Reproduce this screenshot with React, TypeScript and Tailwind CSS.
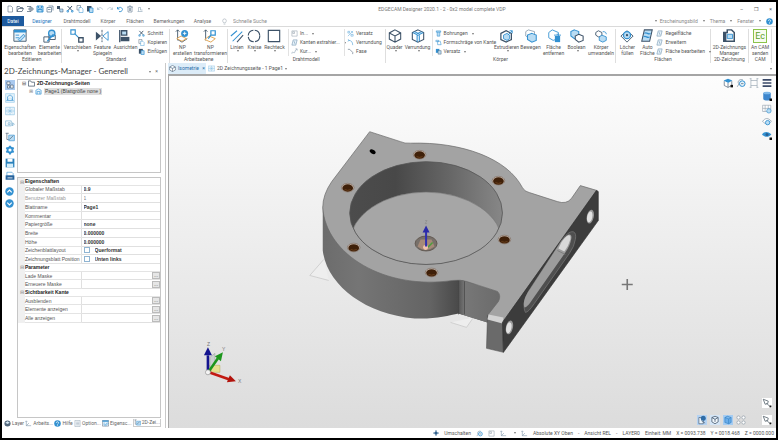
import { type ReactNode } from "react"
import clsx from "clsx"

const NAVY = "#3d5268"
const BLUE = "#3391d1"
const PALE = "#b9dcf3"

// Two-tone icons, all drawn on a 16x16 grid
const icons: Record<string, ReactNode> = {
  file: <path d="M4 2h6l3 3v9H4z" fill="#fff" stroke={NAVY} />,
  open: <path d="M2 13V3h5l1 2h5v2M2 13l3-6h10l-3 6z" fill="#fff" stroke={NAVY} strokeWidth="1.4" />,
  insert: <path d="M2 3h8v10H2M6 6h8v4H6z" fill="#fff" stroke={NAVY} strokeWidth="1.3" />,
  save: <path d="M2 2h12v12H2zM5 2v4h6V2M4 14V9h8v5" fill={PALE} stroke={BLUE} strokeWidth="1.8" />,
  saveAll: <path d="M5 2h9v9M2 5h9v9H2zM4 9h5" fill="#fff" stroke="#58728c" strokeWidth="1.4" />,
  scan: (
    <>
      <path d="M2 2h6v6H2z" fill={NAVY} />
      <path d="M7 8h7v6H8z" fill={PALE} stroke={NAVY} />
    </>
  ),
  cut: (
    <>
      <path d="M3 2l9 9M12 2L4 11" stroke={NAVY} strokeWidth="2" />
      <path d="M2 11h3v3H2zM11 11h3v3h-3z" fill="#fff" stroke={BLUE} strokeWidth="1.6" />
    </>
  ),
  copy: (
    <>
      <path d="M2 1h7v9H2z" fill="#fff" stroke={NAVY} />
      <path d="M6 5h5l3 3v7H6z" fill="#fff" stroke={BLUE} />
    </>
  ),
  paste: (
    <>
      <path d="M2 2h9v11H2z" fill={NAVY} />
      <path d="M7 6h7v9H7z" fill={PALE} stroke={BLUE} strokeWidth="1.5" />
    </>
  ),
  undo: <path d="M3 5v4h4M3 9c3-5 8-5 10 0" fill="none" stroke="#a9bccb" strokeWidth="1.6" />,
  redo: <path d="M13 5v4H9M13 9c-3-5-8-5-10 0" fill="none" stroke="#b8c7d2" strokeWidth="1.6" />,
  refresh: <path d="M3 4v4h4M3 8c3-5 9-4 10 1-1 4-4 5-7 4" fill="none" stroke={BLUE} strokeWidth="1.8" />,
  bin: <path d="M2 4h12M6 4V2h4v2M4 4v10h8V4M7 6v6M9 6v6" fill="none" stroke="#6a8095" strokeWidth="1.3" />,
  pin: <path d="M3 13h10M5 13V5h4v5h4" fill="none" stroke="#9cb0c0" strokeWidth="1.4" />,
  properties: (
    <>
      <path d="M1 1h14v13H1z" fill="#eaf5fc" stroke={NAVY} />
      <path d="M1 1h14v3H1z" fill={BLUE} />
      <path d="M3 7h4M3 10h4M6 12l6-6 2 2-6 6z" fill={PALE} stroke={BLUE} />
    </>
  ),
  elements: (
    <>
      <path d="M1 9h6v6H1zM7 7h7v5H7z" fill="#fff" stroke={NAVY} />
      <circle cx="10" cy="5" r="3.6" fill={PALE} stroke={BLUE} strokeWidth="1.5" />
      <path d="M5 14l7-8" stroke={BLUE} strokeWidth="1.5" />
    </>
  ),
  move: (
    <>
      <path d="M1 1h5v5H1zM5 5l6 6" fill="#fff" stroke={BLUE} strokeWidth="1.3" />
      <path d="M10 10h5v5h-5z" fill="#fff" stroke={NAVY} strokeWidth="1.5" />
    </>
  ),
  mirror: (
    <>
      <path d="M1 3l6 5-6 5z" fill={NAVY} />
      <path d="M15 3l-6 5 6 5z" fill="#fff" stroke={BLUE} />
      <path d="M8 1v14" stroke={NAVY} strokeDasharray="3 1" />
    </>
  ),
  align: (
    <>
      <path d="M2 1v14" stroke={NAVY} strokeWidth="1.5" />
      <path d="M4 2h6v5H4z" fill={PALE} stroke={NAVY} strokeWidth="1.5" />
      <path d="M3 9h10v5H3z" fill={NAVY} />
    </>
  ),
  plane: (
    <>
      <path d="M3 1v12M1 3l2-2 2 2M3 12l5 3 6-4" fill="none" stroke={NAVY} />
      <path d="M2 11l5-3 6 3-5 3z" fill="#fff" stroke="#dd9c43" />
      <circle cx="11" cy="5" r="4" fill={BLUE} />
      <path d="M11 3v4M9 5h4" stroke="#fff" />
    </>
  ),
  planeMove: (
    <>
      <path d="M3 1v12M1 3l2-2 2 2" fill="none" stroke={NAVY} />
      <path d="M2 12l5-4 7 3-5 4z" fill="#fff" stroke="#dd9c43" />
      <path d="M9 2h5v5H9zM6 11l3-4" fill="#fff" stroke={BLUE} strokeWidth="1.4" />
    </>
  ),
  lines: (
    <>
      <path d="M1 8l7-6M3 14L14 3" stroke={BLUE} strokeWidth="1.2" />
      <path d="M8 15l7-8" stroke={NAVY} strokeWidth="1.2" />
    </>
  ),
  circle: <circle cx="8" cy="8" r="6.6" fill="none" stroke={NAVY} strokeWidth="1.3" strokeDasharray="8.8 1.6" />,
  rect: <path d="M1.5 1.5h13v13h-13z" fill="none" stroke={NAVY} strokeWidth="1.3" />,
  smallRect: <path d="M2 2h12v12H2zM4 4h4v4H4z" fill="none" stroke="#7d8c9a" />,
  sheet: <path d="M5 2h9l-3 12H2zM7 5l2 6" fill="#e6f2fa" stroke="#6f93b0" strokeWidth="1.3" />,
  curve: <path d="M2 13c1-9 5 2 7-4 1-4 2-6 5-6M10 2h4v4" fill="none" stroke="#7b93a8" strokeWidth="1.2" />,
  offset: <path d="M2 3h4v4H2zM9 2l5 5M2 14l12-12M9 10h5v4H9z" fill="none" stroke={BLUE} />,
  fillet: <path d="M3 3c7 0 10 4 10 11M2 6l3-3-3-2" fill="none" stroke={BLUE} strokeWidth="1.2" />,
  chamfer: <path d="M2 3h4l7 7v4" fill="none" stroke={NAVY} strokeWidth="1.2" />,
  cube: <path d="M8 1l6.5 3.5v7L8 15l-6.5-3.5v-7zM1.5 4.5L8 8l6.5-3.5M8 8v7" fill="#fff" stroke={NAVY} strokeWidth="1.2" />,
  cubeRound: (
    <>
      <path d="M8 1l6.5 3v8L8 15l-6.5-3V4z" fill="#fff" stroke={NAVY} strokeWidth="1.2" />
      <path d="M2 4l6 3 6-3M7 7v8M9.5 7v7M4 3l6 3M12 3L6 6" fill="none" stroke={BLUE} strokeWidth="1.2" />
    </>
  ),
  hole: <path d="M3 2h10v3H3zM5 5v9h6V5" fill={PALE} stroke={BLUE} strokeWidth="1.3" />,
  draft: <path d="M2 3h6v3H2zM6 5h6l2 8H6z" fill="#fff" stroke={BLUE} strokeWidth="1.3" />,
  offsetBody: (
    <>
      <path d="M2 2h8v9H2z" fill={BLUE} />
      <path d="M7 6h7v8H7z" fill={PALE} stroke={NAVY} />
    </>
  ),
  extrude: (
    <>
      <path d="M1 5l6-3 6 3v7l-6 3-6-3z" fill="#fff" stroke={NAVY} strokeWidth="1.4" />
      <path d="M4 7l4-2 3 2v4l-3 2-4-2z" fill={PALE} stroke={BLUE} />
      <path d="M9 7l5-5M11 2h3v3" stroke={BLUE} fill="none" />
    </>
  ),
  moveBody: (
    <>
      <path d="M5 1l7 2v7l-6 1-4-3V3z" fill="#fff" stroke="#8da0b1" />
      <path d="M9 5l5 2v6l-5 2-5-3V7z" fill={PALE} stroke={BLUE} strokeWidth="1.2" />
    </>
  ),
  deleteFace: (
    <>
      <path d="M6 1l7 3v7l-6 2-5-3V4z" fill="#fff" stroke={BLUE} />
      <path d="M9 8h6v7H9z" fill={BLUE} />
      <path d="M8 7h8M11 6h2" stroke={BLUE} />
    </>
  ),
  boolean: (
    <>
      <path d="M5 1l5 2v6l-5 2-4-3V3z" fill={PALE} stroke={BLUE} strokeWidth="1.2" />
      <path d="M10 6l5 2v5l-5 2-4-3V8z" fill="#fff" stroke={NAVY} strokeWidth="1.2" />
    </>
  ),
  convert: (
    <>
      <path d="M5 2l4 2v4L5 9 2 7V4z" fill="#fff" stroke={NAVY} />
      <path d="M9 7l5 2v4l-4 2-4-2V9z" fill={PALE} stroke={BLUE} />
      <path d="M10 3c3 0 4 1 4 3" stroke={BLUE} fill="none" />
    </>
  ),
  fillHoles: (
    <>
      <path d="M1 8l7-6 7 6-7 7z" fill="#fff" stroke={NAVY} />
      <circle cx="8" cy="7" r="4" fill={PALE} stroke={BLUE} strokeWidth="1.5" />
      <circle cx="8" cy="7" r="1.3" fill={NAVY} />
    </>
  ),
  autoFace: (
    <>
      <path d="M5 1h9l-3 13H2z" fill={PALE} stroke={NAVY} strokeWidth="1.2" />
      <path d="M5 5c3-2 4 2 7 0M4 9c3-2 4 2 7 0" fill="none" stroke={BLUE} strokeWidth="1.3" />
    </>
  ),
  drawing: (
    <>
      <path d="M2 4h4V1h5l3 3v10H2z" fill="#fff" stroke={NAVY} strokeWidth="1.7" />
      <path d="M6 6h6v5H6z" fill={PALE} stroke={BLUE} />
      <path d="M2 4v10h3V4z" fill={NAVY} />
    </>
  ),
  view: (
    <>
      <path d="M1 1h14v14H1z" fill="#e3f2fb" stroke="#9ccbe8" />
      <path d="M4 6l4-3 4 3v6H4zM2 13l4-4M14 13l-4-4" fill="none" stroke={BLUE} />
    </>
  ),
  views: (
    <>
      <path d="M0 0h16v16H0z" fill="#a9c9ef" />
      <path d="M3 3h5v4H3zM9 8h4v5H9zM4 9h3v4H4z" fill="#fff" stroke={NAVY} />
    </>
  ),
  grid: <path d="M1 2h14v12H1zM1 8h14M8 2v12M4 5l8 6M12 5l-8 6" fill="#edf6fc" stroke="#8ac1e4" />,
  section: <path d="M1 3h9v8H1zM5 6h3v3H5zM12 6l3 2-3 3z" fill="#fff" stroke="#6ba6cc" />,
  tree: (
    <>
      <path d="M1 2h5M3 2v10h3" fill="none" stroke={NAVY} />
      <path d="M6 5h9v9H6z" fill={PALE} stroke={BLUE} />
      <path d="M7 12l6-6" stroke={NAVY} />
    </>
  ),
  gear: (
    <>
      <circle cx="8" cy="8" r="5.5" fill={BLUE} />
      <path d="M8 1v14M2 4.500l12 7M14 4.500l-12 7" stroke={BLUE} strokeWidth="3" />
      <circle cx="8" cy="8" r="2.5" fill="#fff" />
    </>
  ),
  floppy: (
    <>
      <path d="M1 1h14v14H1z" fill="#2980bb" />
      <path d="M4 1h8v5H4z" fill="#fff" />
      <path d="M3 9h10v6H3z" fill="#d5eefa" />
    </>
  ),
  printer: (
    <>
      <path d="M3 2h8l2 2v4H3z" fill="#fff" stroke={BLUE} />
      <path d="M1 7h14v7H1z" fill="#27639d" />
      <path d="M4 11h8" stroke="#fff" strokeWidth="1.3" />
    </>
  ),
  up: (
    <>
      <circle cx="8" cy="8" r="7.5" fill={BLUE} />
      <path d="M4 9.500l4-4 4 4" fill="none" stroke="#fff" strokeWidth="2" />
    </>
  ),
  down: (
    <>
      <circle cx="8" cy="8" r="7.5" fill={BLUE} />
      <path d="M4 6.500l4 4 4-4" fill="none" stroke="#fff" strokeWidth="2" />
    </>
  ),
  help: (
    <>
      <circle cx="8" cy="8" r="7.5" fill={BLUE} />
      <path d="M5.500 6.500c0-4 5-3 5 0 0 2-2.500 1.500-2.500 4M8 12v1.500" fill="none" stroke="#fff" strokeWidth="1.6" />
    </>
  ),
  bulb: <path d="M6 11c-3-3-3-9 2-9s5 6 2 9zM6 14h4" fill="none" stroke="#93a0ab" strokeWidth="1.2" />,
  layer: (
    <>
      <circle cx="8" cy="8" r="7" fill="#52677c" />
      <path d="M3 6l5-3 5 3-5 3z" fill="#d7e7f2" />
    </>
  ),
  axes: <path d="M3 2v11h11M3 13l6-6M1 4l2-2 2 2" fill="none" stroke="#7b93a8" strokeWidth="1.3" />,
  options: <path d="M2 1h12v14H2zM5 5h7M5 8h7M5 11h7" fill="#f2f6f9" stroke="#8799a9" />,
  shaded: (
    <>
      <path d="M1 4l7-3 7 3-7 4z" fill={BLUE} />
      <path d="M2 5v7l6 3V8M14 5v7l-6 3" fill="#fff" stroke={NAVY} />
      <path d="M12 11h4v4h-4z" fill="#111" />
    </>
  ),
  zoom: (
    <>
      <path d="M2 14l3-5M4 9c-2-4 2-8 7-6" fill="none" stroke="#8b9dac" strokeWidth="1.4" />
      <circle cx="10" cy="9" r="4.5" fill="#e5f3fb" stroke={BLUE} strokeWidth="1.6" />
      <path d="M8 9h4" stroke={NAVY} />
    </>
  ),
  fit: <path d="M3 1v14M13 1v14M3 4h10M3 12h10M1 1h3M12 1h3M1 15h3M12 15h3" fill="none" stroke="#93a2af" />,
  menu: <path d="M1 3h14M1 8h14M1 13h14" stroke="#3b4a68" strokeWidth="2.6" />,
  cylinder: (
    <>
      <path d="M2 3v10c2 3 10 3 12 0V3z" fill="#3d86cd" />
      <ellipse cx="8" cy="3" rx="6" ry="2" fill="#7db7e8" />
      <path d="M12 12h4v4h-4z" fill="#111" />
    </>
  ),
  mesh: (
    <>
      <path d="M1 2h13v10H1zM1 7h13M5 2v10M10 2v10" fill="#fff" stroke="#94a1ad" />
      <circle cx="11" cy="11" r="3.5" fill={PALE} stroke={BLUE} />
    </>
  ),
  eye: (
    <>
      <path d="M1 7c4-6 9-6 14 0-5 5-10 5-14 0z" fill="#fff" stroke="#74889a" />
      <circle cx="9" cy="9" r="3.5" fill={PALE} stroke={BLUE} strokeWidth="1.4" />
    </>
  ),
  eyeFill: (
    <>
      <path d="M0 7c4-5 9-5 15 0-5 5-10 5-15 0z" fill={BLUE} />
      <circle cx="8" cy="7" r="2.4" fill="#2a5f91" />
      <path d="M12 12h4v4h-4z" fill="#111" />
    </>
  ),
  box: <path d="M8 2l5 2v7l-5 3-5-3V4zM3 4l5 3 5-3M8 7v4" fill="#f2f8fd" stroke={NAVY} strokeWidth="1.2" />,
  wire: (
    <>
      <path d="M3 4h7v10H3z" fill="#eef6fd" stroke={NAVY} />
      <circle cx="10" cy="5" r="4" fill="#2f6ca6" />
      <path d="M7 9l6 4" stroke={NAVY} />
    </>
  ),
  solid: <path d="M3 4l4-2 6 2v8l-4 2-6-2zM3 4l6 2 4-2M9 6v8" fill="#6badea" stroke="#2f7ec2" />,
  dots: (
    <g fill="#fff" stroke="#8794a1">
      <circle cx="4" cy="4" r="2.6" />
      <circle cx="12" cy="4" r="2.6" />
      <circle cx="4" cy="12" r="2.6" />
      <circle cx="12" cy="12" r="2.6" />
    </g>
  ),
  pick: (
    <>
      <path d="M2 2l8 3-1 4-4 1zM7 8l5 5" fill="#fff" stroke="#57656f" strokeWidth="1.3" />
      <path d="M12 12h3v3h-3z" fill="#111" />
    </>
  ),
  cross: (
    <>
      <path d="M8 0l3 4H5zM8 16l3-4H5zM0 8l4-3v6zM16 8l-4-3v6z" fill="#31618c" />
      <circle cx="8" cy="8" r="4" fill="#31618c" />
    </>
  ),
  folder: <path d="M1 14V2h5l2 3h7v9z" fill="#fff" stroke="#44566a" strokeWidth="1.7" />,
  page: <path d="M2 5l6-3 6 3v9H2zM5 14V8h6v6" fill="#e7f4fd" stroke={BLUE} strokeWidth="1.4" />,
}

const Icon = ({ name, className }: { name: string; className: string }) => (
  <svg viewBox="0 0 16 16" aria-hidden="true" className={clsx("shrink-0", className)}>
    {icons[name]}
  </svg>
)

const Caret = () => <span className="ml-0.5 inline-block border-x-[1px] border-t-[2px] border-x-transparent border-t-[#777]" />

const Big = ({ icon, lines, width, caret }: { icon: string; lines: string[]; width: string; caret?: boolean }) => (
  <button className={clsx("flex shrink-0 flex-col items-center whitespace-nowrap", width)}>
    <Icon name={icon} className="mb-[1px] size-[14px]" />
    {lines.map((line) => (
      <span key={line} className="leading-[6px]">{line}</span>
    ))}
    {caret && <Caret />}
  </button>
)

const Small = ({ icon, label, caret }: { icon: string; label: string; caret?: boolean }) => (
  <button className="flex h-[9px] items-center gap-[2px] whitespace-nowrap">
    <Icon name={icon} className="size-[7px]" />
    <span>{label}</span>
    {caret && <Caret />}
  </button>
)

const Group = ({ label, className, children }: { label: string; className: string; children: ReactNode }) => (
  <section className={clsx("flex min-w-0 basis-0 flex-col border-r border-[#dedede]", className)}>
    <div className="flex h-[28px] items-start">{children}</div>
    <div className="text-center leading-[7px]">{label}</div>
  </section>
)

const Ec = () => (
  <button className="flex w-full flex-col items-center whitespace-nowrap">
    <span className="mb-[1px] flex size-[14px] items-center justify-center border border-[#8bc34a] bg-[#f7fcf0] text-[9px] leading-none text-[#5da02b]">
      Ec
    </span>
    <span className="leading-[6px]">An CAM</span>
    <span className="leading-[6px]">senden</span>
  </button>
)

const quick = ["file", "open", "insert", "save", "saveAll", "scan", "cut", "copy", "paste", "undo", "redo", "refresh", "bin", "pin"]

const TitleBar = () => (
  <header className="grid h-[14px] grid-cols-[1fr_auto_1fr] items-center">
    <div className="flex items-center gap-[2px] pl-1">
      {quick.map((name) => (
        <button key={name} aria-label={name}>
          <Icon name={name} className="size-2" />
        </button>
      ))}
      <Caret />
    </div>
    <h1 className="pl-[106px] font-normal text-[#777]">EDGECAM Designer 2020.1 - 2 - 0x2 model complete VDP</h1>
    <div className="flex justify-end gap-[11px] pr-1 leading-none text-[#555]">
      <button aria-label="Minimieren">–</button>
      <button aria-label="Wiederherstellen">❐</button>
      <button aria-label="Schließen">×</button>
    </div>
  </header>
)

const Tabs = () => (
  <nav className="flex h-[10px] items-stretch text-[#666]">
    <button className="w-[22px] bg-[#1d5a9e] text-white">Datei</button>
    <button className="w-[36px] text-[#2a77bd]">Designer</button>
    <button className="w-[34px]">Drahtmodell</button>
    <button className="w-[28px]">Körper</button>
    <button className="w-[26px]">Flächen</button>
    <button className="w-[42px]">Bemerkungen</button>
    <button className="w-[25px]">Analyse</button>
    <label className="ml-[6px] flex items-center gap-[5px]">
      <Icon name="bulb" className="size-[7px]" />
      <input aria-label="Schnelle Suche" placeholder="Schnelle Suche" className="w-20 outline-none placeholder:text-[#888]" />
    </label>
    <div className="ml-auto flex items-center gap-[3px] pr-[3px] text-[#888]">
      <Caret />
      <button>Erscheinungsbild</button>
      <Caret />
      <button className="ml-[2px]">Thema</button>
      <Caret />
      <button className="ml-[2px]">Fenster</button>
      <Caret />
      <button aria-label="Hilfe" className="ml-[2px]">
        <Icon name="help" className="size-[7px]" />
      </button>
    </div>
  </nav>
)

const Ribbon = () => (
  <div className="flex h-[37px] border-t border-[#dadada] pt-[2px] pr-1">
    <Group label="Editieren" className="grow-[60]">
      <Big icon="properties" lines={["Eigenschaften", "bearbeiten"]} width="w-[36px]" />
      <Big icon="elements" lines={["Elemente", "bearbeiten"]} width="w-[23px]" />
    </Group>
    <Group label="Standard" className="grow-[108]">
      <Big icon="move" lines={["Verschieben"]} width="w-[30px]" caret />
      <Big icon="mirror" lines={["Feature", "Spiegeln"]} width="w-[20px]" />
      <Big icon="align" lines={["Ausrichten"]} width="w-[26px]" />
      <div>
        <Small icon="cut" label="Schnitt" />
        <Small icon="copy" label="Kopieren" />
        <Small icon="paste" label="Einfügen" />
      </div>
    </Group>
    <Group label="Arbeitsebene" className="grow-[57]">
      <Big icon="plane" lines={["NP", "erstellen"]} width="w-[24px]" />
      <Big icon="planeMove" lines={["NP", "transformieren"]} width="w-[32px]" />
    </Group>
    <Group label="Drahtmodell" className="grow-[158]">
      <Big icon="lines" lines={["Linien"]} width="w-[18px]" caret />
      <Big icon="circle" lines={["Kreise"]} width="w-[17px]" caret />
      <Big icon="rect" lines={["Rechteck"]} width="w-[23px]" caret />
      <div className="ml-[2px] w-[56px] border-l border-[#e2e2e2] pl-[2px]">
        <Small icon="smallRect" label="In..." caret />
        <Small icon="sheet" label="Kanten extrahier..." caret />
        <Small icon="curve" label="Kur..." caret />
      </div>
      <div className="border-l border-[#e2e2e2] pl-[2px]">
        <Small icon="offset" label="Versatz" />
        <Small icon="fillet" label="Verrundung" />
        <Small icon="chamfer" label="Fase" />
      </div>
    </Group>
    <Group label="Körper" className="grow-[232]">
      <Big icon="cube" lines={["Quader"]} width="w-[18px]" caret />
      <Big icon="cubeRound" lines={["Verrundung"]} width="w-[28px]" caret />
      <div className="w-[62px] border-l border-[#e2e2e2] pl-[2px]">
        <Small icon="hole" label="Bohrungen" caret />
        <Small icon="draft" label="Formschräge von Kante" />
        <Small icon="offsetBody" label="Versatz" caret />
      </div>
      <Big icon="extrude" lines={["Extrudieren"]} width="w-[26px]" caret />
      <Big icon="moveBody" lines={["Bewegen"]} width="w-[22px]" />
      <Big icon="deleteFace" lines={["Fläche", "entfernen"]} width="w-[24px]" />
      <Big icon="boolean" lines={["Boolean"]} width="w-[22px]" caret />
      <Big icon="convert" lines={["Körper", "umwandeln"]} width="w-[27px]" />
    </Group>
    <Group label="Flächen" className="grow-[94]">
      <Big icon="fillHoles" lines={["Löcher", "füllen"]} width="w-[22px]" />
      <Big icon="autoFace" lines={["Auto", "Fläche"]} width="w-[18px]" />
      <div>
        <Small icon="sheet" label="Regelfläche" />
        <Small icon="sheet" label="Erweitern" />
        <Small icon="sheet" label="Fläche bearbeiten" caret />
      </div>
    </Group>
    <Group label="2D-Zeichnung" className="grow-[38]">
      <Big icon="drawing" lines={["2D-Zeichnungs", "Manager"]} width="w-full" />
    </Group>
    <Group label="CAM" className="grow-[22]">
      <Ec />
    </Group>
  </div>
)

type Row = { label: string; value?: string; kind?: "head" | "muted" | "icon" | "more" }

const rows: Row[] = [
  { label: "Eigenschaften", kind: "head" },
  { label: "Globaler Maßstab", value: "0.9" },
  { label: "Benutzer Maßstab", value: "1", kind: "muted" },
  { label: "Blattname", value: "Page1" },
  { label: "Kommentar", value: "" },
  { label: "Papiergröße", value: "none" },
  { label: "Breite", value: "0.000000" },
  { label: "Höhe", value: "0.000000" },
  { label: "Zeichenblattlayout", value: "Querformat", kind: "icon" },
  { label: "Zeichnungsblatt Position", value: "Unten links", kind: "icon" },
  { label: "Parameter", kind: "head" },
  { label: "Lade Maske", kind: "more" },
  { label: "Erneuere Maske", kind: "more" },
  { label: "Sichtbarkeit Kante", kind: "head" },
  { label: "Ausblenden", kind: "more" },
  { label: "Elemente anzeigen", kind: "more" },
  { label: "Alle anzeigen", kind: "more" },
]

const Properties = () => (
  <table className="h-[145px] w-full table-fixed border-collapse leading-[6px]">
    <colgroup>
      <col className="w-[7px]" />
      <col className="w-[56px]" />
      <col />
    </colgroup>
    <tbody>
      {rows.map((row) =>
        row.kind === "head" ? (
          <tr key={row.label}>
            <td className="bg-[#f0f0f0] text-center text-[#888]">⊟</td>
            <th colSpan={2} className="border-b border-[#e4e4e4] text-left font-bold text-[#222]">{row.label}</th>
          </tr>
        ) : (
          <tr key={row.label}>
            <td className="bg-[#f0f0f0]" />
            <th className={clsx("border-b border-[#e4e4e4] text-left font-normal whitespace-nowrap", row.kind === "muted" ? "text-[#999]" : "text-[#555]")}>
              {row.label}
            </th>
            <td className="border-b border-l border-[#e0e0e0] pl-[2px]">
              <div className="flex h-[7px] items-center">
                {row.kind === "icon" && <span className="mr-[5px] size-[6px] shrink-0 border border-[#8fb4d2] bg-white" />}
                <input
                  aria-label={row.label}
                  defaultValue={row.value}
                  className={clsx("w-full min-w-0 outline-none", row.kind === "muted" ? "text-[#888]" : "font-bold text-[#333]")}
                />
                {row.kind === "more" && (
                  <button aria-label={`${row.label} wählen`} className="h-[7px] w-2 shrink-0 border border-[#bbb] bg-[#e6e6e6] leading-[3px]">
                    ...
                  </button>
                )}
              </div>
            </td>
          </tr>
        )
      )}
    </tbody>
  </table>
)

const sideTools = ["views", "view", "grid", "section", "tree", "gear", "floppy", "printer"]

const bottomTabs = [
  { icon: "layer", label: "Layer" },
  { icon: "axes", label: "Arbeits..." },
  { icon: "help", label: "Hilfe" },
  { icon: "options", label: "Option..." },
  { icon: "properties", label: "Eigensc..." },
  { icon: "tree", label: "2D-Zei..." },
]

const SidePanel = () => (
  <aside className="flex w-[160px] shrink-0 flex-col">
    <div className="flex h-[16px] items-center justify-between pr-1 pl-[2px]">
      <h2 className="font-['Lato',sans-serif] text-[8px] leading-[10px] whitespace-nowrap text-[#444]">2D-Zeichnungs-Manager - Generell</h2>
      <div className="flex items-center gap-[4px] text-[#666]">
        <button aria-label="Anheften">
          <Caret />
        </button>
        <button aria-label="Panel schließen">×</button>
      </div>
    </div>
    <div className="flex min-h-0 flex-1">
      <div className="flex w-[15px] flex-col items-center gap-[3px] pt-[1px]">
        {sideTools.map((name) => (
          <button key={name} aria-label={name}>
            <Icon name={name} className="size-[10px]" />
          </button>
        ))}
        <button aria-label="Nach oben" className="mt-[3px]">
          <Icon name="up" className="size-[9px]" />
        </button>
        <button aria-label="Nach unten">
          <Icon name="down" className="size-[9px]" />
        </button>
      </div>
      <div className="flex min-w-0 flex-1 flex-col gap-[4px] pr-[1px] font-['Liberation_Sans',sans-serif]">
        <div className="h-[94px] border border-[#c6c6c6] px-[4px]">
          <div className="flex h-[7px] items-center gap-[2px] font-bold text-[#222]">
            <span className="text-[#888]">⊟</span>
            <Icon name="folder" className="size-[7px]" />
            2D-Zeichnungs-Seiten
          </div>
          <div className="flex h-[8px] items-center gap-[2px] pl-[7px] text-[#444]">
            <span className="text-[#888]">⊞</span>
            <Icon name="page" className="size-[7px]" />
            <span className="bg-[#dedede] px-[1px]">Page1 (Blattgröße none )</span>
          </div>
        </div>
        <div className="flex-1 border border-[#c6c6c6]">
          <Properties />
        </div>
      </div>
    </div>
    <nav className="flex h-[10px] items-center justify-between pr-[1px] pl-[2px] text-[#666]">
      {bottomTabs.map((tab, i) => (
        <button key={tab.label} className={clsx("flex items-center gap-[1px] whitespace-nowrap", i === 5 && "border border-t-0 border-[#ccc]")}>
          <Icon name={tab.icon} className="size-[7px]" />
          {tab.label}
        </button>
      ))}
    </nav>
  </aside>
)

const boreHoles = [
  [419, 154],
  [347, 187],
  [353, 247],
  [431, 272],
  [504, 239],
  [498, 180],
]

const Model = () => (
  <svg viewBox="168 76 608 351" preserveAspectRatio="xMidYMid meet" className="absolute inset-0 size-full" role="img" aria-label="3D-Modell">
    <defs>
      <linearGradient id="side" x1="322" x2="465" y1="0" y2="0" gradientUnits="userSpaceOnUse">
        <stop offset="0" stopColor="#6c6c6c" />
        <stop offset="0.25" stopColor="#757575" />
        <stop offset="0.75" stopColor="#646464" />
        <stop offset="0.97" stopColor="#474747" />
        <stop offset="1" stopColor="#5c5c5c" />
      </linearGradient>
      <linearGradient id="wall" x1="349" x2="502" y1="0" y2="0" gradientUnits="userSpaceOnUse">
        <stop offset="0" stopColor="#4c4c4c" />
        <stop offset="0.3" stopColor="#484848" />
        <stop offset="0.65" stopColor="#666" />
        <stop offset="1" stopColor="#878787" />
      </linearGradient>
      <linearGradient id="pocket" x1="458" x2="500" y1="0" y2="0" gradientUnits="userSpaceOnUse">
        <stop offset="0" stopColor="#555" />
        <stop offset="0.15" stopColor="#777" />
        <stop offset="1" stopColor="#6b6b6b" />
      </linearGradient>
      <clipPath id="bore">
        <ellipse cx="425.5" cy="212.5" rx="76.5" ry="51.5" />
      </clipPath>
    </defs>

    {/* construction plane */}
    <path d="M323 259L309 275L328 280M450 322L466 327L473 317" fill="#eee" stroke="#c4c4c4" strokeWidth="0.7" />

    {/* body */}
    <path d="M322 206V250C326 284 364 314 414 318C434 319 448 315 458 313L487 322V290L450 270Z" fill="url(#side)" />
    <path d="M458 279L500 291V312L487 322L458 313Z" fill="url(#pocket)" />
    <path d="M458 279V314M464 280V314" stroke="#444" strokeWidth="0.7" />
    <path
      d="M369 131L400 141Q404 143 410 142.500C462 141 507 158 522 187Q524 191 529 192L557 201Q566 204 571 198L580 185L597 190L502 322L487 315L498 301Q501 295 497 291L466 281Q460 279 452 280C384 290 325 254 322 207Q322 194 331 181Z"
      fill="#a3a3a3"
      stroke="#6a6a6a"
      strokeWidth="0.7"
    />

    {/* bore */}
    <ellipse cx="425.5" cy="212.5" rx="76.5" ry="51.5" fill="url(#wall)" />
    <ellipse cx="425.5" cy="243" rx="76.5" ry="51.5" fill="#a6a6a6" stroke="#777" strokeWidth="0.6" clipPath="url(#bore)" />
    <ellipse cx="425.5" cy="212.5" rx="76.5" ry="51.5" fill="none" stroke="#555" strokeWidth="0.8" />

    {boreHoles.map(([x, y]) => (
      <g key={x}>
        <ellipse cx={x} cy={y} rx="6.3" ry="4.3" fill="#c9bbb0" stroke="#695548" strokeWidth="0.5" />
        <ellipse cx={x} cy={y + 0.4} rx="5.4" ry="3.7" fill="#3f2009" />
        <path d={`M${x - 3} ${y + 2}q3 1.500 6 0`} stroke="#7a4d24" strokeWidth="0.7" fill="none" />
      </g>
    ))}
    <ellipse cx="372" cy="151" rx="3.2" ry="2" fill="#000" transform="rotate(30 372 151)" />

    {/* centre hole with local origin */}
    <ellipse cx="425.5" cy="243" rx="11" ry="7.5" fill="#77706a" stroke="#54483f" strokeWidth="0.7" />
    <path d="M417 246Q425 253 434 246L431 239L420 239Z" fill="#a68a78" />
    <path d="M427 247l5-5" stroke="#4b9c3d" strokeWidth="1.5" />
    <circle cx="425" cy="247" r="2.5" fill="#f0c3ad" />
    <path d="M425.500 246V231" stroke="#3030b0" strokeWidth="2" />
    <path d="M422 232l3.500-7 3.500 7z" fill="#2b2ba8" />
    <path d="M424.500 220h2l-2 3h2" stroke="#888" strokeWidth="0.6" fill="none" />

    {/* flange */}
    <path d="M487 315L502 322L503 352L486 348Z" fill="#6a6a6a" stroke="#484848" strokeWidth="0.5" />
    <path d="M488 314L503 317L502 323L487 319Z" fill="#d2d2d2" />
    <path d="M502 322L596 190L598 191V220L503 352Z" fill="#3c3c3c" stroke="#2b2b2b" strokeWidth="0.6" />
    <path d="M525 312C522 306 524 297 530 288L562 239C570 228 577 229 575 239Q574 246 569 253L534 303Q528 312 525 312Z" fill="#4f4f4f" stroke="#777" strokeWidth="0.7" />
    <path d="M524 307C522 302 525 295 530 288L560 242C567 232 572 232 571 238Q570 245 565 252L532 299Q527 307 524 307Z" fill="#9c9c9c" />
    <path d="M561 242C567 233 571 233 570 239Q568 246 564 251L558 248Z" fill="#d8d8d8" />
    <path d="M557 250l8 4" stroke="#777" strokeWidth="0.8" />
    {[
      [590, 216],
      [509, 327],
    ].map(([x, y]) => (
      <g key={x} transform={`rotate(12 ${x} ${y})`}>
        <ellipse cx={x} cy={y} rx="3.5" ry="7" fill="#999" />
        <ellipse cx={x - 0.5} cy={y + 0.5} rx="2.6" ry="5.5" fill="#e2e2e2" />
      </g>
    ))}

    {/* cursor */}
    <path d="M627 278.500v11M621.500 284h11" stroke="#777" strokeWidth="1.6" />

    {/* view axes */}
    <path d="M208 365h11v7h-8z" fill="#e6e08f" stroke="#b3ad56" strokeWidth="0.5" />
    <path d="M209 357l5-4v10l-5 7z" fill="#c9d0d0" stroke="#999" strokeWidth="0.5" />
    <path d="M207 371V355" stroke="#14148f" strokeWidth="2.6" />
    <path d="M203 355l4-8 4 8z" fill="#14148f" />
    <path d="M208 371l9-13" stroke="#1c961c" strokeWidth="2.6" />
    <path d="M214 356l8-4-2 9z" fill="#1c961c" />
    <path d="M208 372l20 7" stroke="#c31a12" strokeWidth="2.6" />
    <path d="M229 375l6 6-9 1z" fill="#b2130c" />
    <circle cx="207" cy="372" r="2.5" fill="#f4f4f4" stroke="#888" strokeWidth="0.6" />
    <g fill="#777" fontSize="5" fontFamily="Liberation Sans, sans-serif">
      <text x="206" y="346">Z</text>
      <text x="221" y="351">Y</text>
      <text x="237" y="383">X</text>
    </g>
  </svg>
)

const Tool = ({ name, className }: { name: string; className?: string }) => (
  <button aria-label={name} className={className}>
    <Icon name={name} className="size-[10px]" />
  </button>
)

const Viewport = () => (
  <main className="flex min-w-0 flex-1 flex-col border-l border-[#c9c9c9] pl-[2px]">
    <div className="flex h-[11px] items-center text-[#555]">
      <button className="flex h-full w-[38px] items-center gap-[2px] bg-[#dcecf8] px-[1px] text-[#2a6da8]">
        <Icon name="cube" className="size-[7px]" />
        Isometrie
        <span className="ml-auto">×</span>
      </button>
      <button className="flex items-center gap-[2px] pl-[2px] whitespace-nowrap">
        <Icon name="grid" className="size-[7px]" />
        2D Zeichnungsseite - 1 Page1
      </button>
      <Caret />
      <span className="ml-auto pr-1">
        <Caret />
      </span>
    </div>
    <div className="relative flex-1 border-t-2 border-l border-[#a5a5a5] bg-linear-to-b from-[#fdfdfd] to-[#dcdcdc]">
      <Model />
      <div className="absolute top-[2px] right-[4px] flex gap-[3px]">
        {["shaded", "zoom", "fit", "menu"].map((name) => (
          <Tool key={name} name={name} />
        ))}
      </div>
      <div className="absolute top-[15px] right-[4px] flex flex-col gap-[3px]">
        {["cylinder", "mesh", "eye", "eyeFill"].map((name) => (
          <Tool key={name} name={name} />
        ))}
      </div>
      <div className="absolute right-[4px] bottom-[3px] flex items-end gap-[3px]">
        <Tool name="wire" className="bg-[#b5d3f3]" />
        <Tool name="box" className="bg-[#d5e6f7]" />
        <Tool name="solid" className="bg-[#a5ccf2]" />
        <Tool name="dots" />
        <div className="ml-[13px] flex flex-col gap-[7px]">
          <Tool name="pick" className="bg-white" />
          <Tool name="pick" className="bg-white" />
        </div>
      </div>
    </div>
  </main>
)

const StatusBar = () => (
  <footer className="flex h-[10px] items-center justify-end gap-[5px] pr-[2px] whitespace-nowrap text-[#555]">
    <Icon name="cross" className="size-[6px]" />
    <button>Umschalten</button>
    <Icon name="zoom" className="size-[7px]" />
    <Icon name="smallRect" className="size-[7px]" />
    <Icon name="axes" className="size-[7px]" />
    <Caret />
    <Icon name="axes" className="size-[7px]" />
    <button>Absolute XY Oben</button>
    <span>-</span>
    <button>Ansicht REL</button>
    <span>-</span>
    <button>LAYER0</button>
    <span>Einheit: MM</span>
    <span>X = 0093.738</span>
    <span>Y = 0018.468</span>
    <span>Z = 0000.000</span>
  </footer>
)

export default function App() {
  return (
    <div className="flex h-screen flex-col overflow-hidden border-2 border-black bg-white font-['Roboto',sans-serif] text-[5px] leading-[7px] text-[#555]">
      <TitleBar />
      <Tabs />
      <Ribbon />
      <div className="flex min-h-0 flex-1 gap-[3px]">
        <SidePanel />
        <Viewport />
      </div>
      <StatusBar />
    </div>
  )
}
